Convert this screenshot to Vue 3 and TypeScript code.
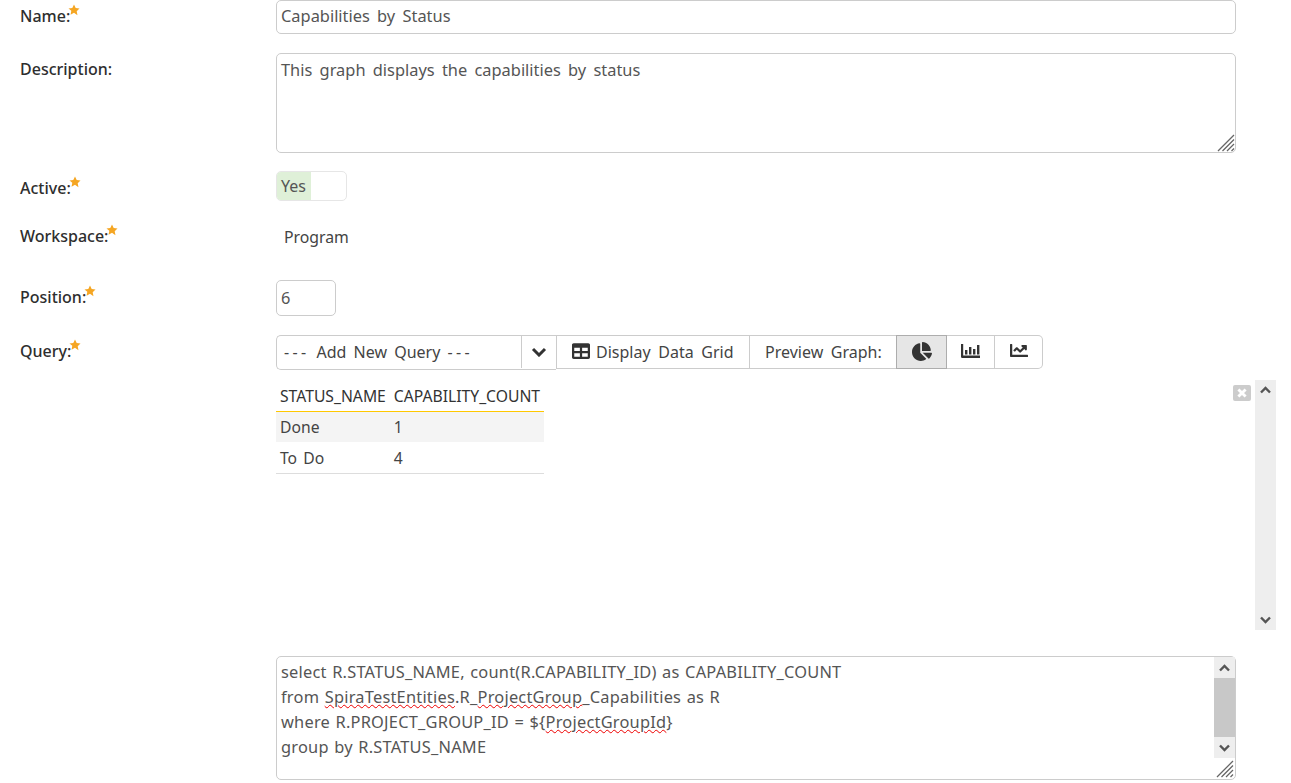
<script setup lang="ts">
const rows = [
  { name: 'Done', count: 1 },
  { name: 'To Do', count: 4 },
]
</script>

<template>
  <div class="page">
    <div class="row row-name">
      <label class="label">Name:<svg class="star" viewBox="0 0 24 24"><path d="M12 1l3.4 7.2 7.6 1-5.6 5.4 1.5 7.9L12 17.700l-6.900 3.800 1.500-7.900L1 9.200l7.600-1z" /></svg></label>
      <input class="field name-input" type="text" value="Capabilities by Status" spellcheck="false" />
    </div>
    <div class="row row-desc">
      <label class="label">Description:</label>
      <div class="area-wrap">
        <textarea class="field area" spellcheck="false">This graph displays the capabilities by status</textarea>
        <svg class="grip" viewBox="0 0 18 18"><path d="M17 1L1 17M17 5.500L5.500 17M17 10L10 17M17 14.500L14.500 17" /></svg>
      </div>
    </div>
    <div class="row row-active">
      <label class="label">Active:<svg class="star" viewBox="0 0 24 24"><path d="M12 1l3.4 7.2 7.6 1-5.6 5.4 1.5 7.9L12 17.700l-6.900 3.800 1.500-7.900L1 9.200l7.600-1z" /></svg></label>
      <div class="toggle"><span class="toggle-on">Yes</span></div>
    </div>
    <div class="row row-ws">
      <label class="label">Workspace:<svg class="star" viewBox="0 0 24 24"><path d="M12 1l3.4 7.2 7.6 1-5.6 5.4 1.5 7.9L12 17.700l-6.900 3.800 1.500-7.900L1 9.200l7.600-1z" /></svg></label>
      <div class="ws-value">Program</div>
    </div>
    <div class="row row-pos">
      <label class="label">Position:<svg class="star" viewBox="0 0 24 24"><path d="M12 1l3.4 7.2 7.6 1-5.6 5.4 1.500 7.900L12 17.700l-6.900 3.800 1.500-7.900L1 9.200l7.600-1z" /></svg></label>
      <input class="field pos" type="text" value="6" spellcheck="false" />
    </div>
    <div class="row row-query">
      <label class="label">Query:<svg class="star" viewBox="0 0 24 24"><path d="M12 1l3.4 7.2 7.6 1-5.6 5.4 1.500 7.900L12 17.700l-6.900 3.800 1.500-7.900L1 9.200l7.600-1z" /></svg></label>
      <div class="toolbar">
        <div class="select">
          <span class="select-text"><span class="dash">---</span> Add New Query <span class="dash">---</span></span>
          <span class="select-btn">
            <svg class="chev" viewBox="0 0 16 10"><path d="M2 2l6 6 6-6" /></svg>
          </span>
        </div>
        <button class="tb grid-btn">
          <svg class="ic-table" viewBox="0 0 512 512"><path d="M464 32H48C21.490 32 0 53.490 0 80v352c0 26.510 21.490 48 48 48h416c26.510 0 48-21.490 48-48V80c0-26.510-21.490-48-48-48zM224 416H64v-96h160v96zm0-160H64v-96h160v96zm224 160H288v-96h160v96zm0-160H288v-96h160v96z" /></svg>
          Display Data Grid
        </button>
        <div class="tb preview">Preview Graph:</div>
        <button class="tb icon active">
          <svg class="ic-pie" viewBox="0 0 544 512"><path d="M527.790 288H290.500l158.030 158.030c6.040 6.040 15.980 6.530 22.190.68 38.700-36.460 65.320-85.610 73.130-140.860 1.340-9.460-6.510-17.850-16.060-17.850zm-15.830-64.800C503.720 103.740 408.260 8.280 288.800.04 279.680-.59 272 7.100 272 16.240V240h223.770c9.140 0 16.820-7.680 16.190-16.800zM224 288V50.710c0-9.550-8.390-17.400-17.840-16.060C86.990 51.490-4.100 155.600.14 280.370 4.500 408.510 114.830 513.590 243.030 511.980c50.400-.63 96.970-16.870 135.260-44.030 7.900-5.600 8.420-17.230 1.570-24.080L224 288z" /></svg>
        </button>
        <button class="tb icon">
          <svg class="ic-bar" viewBox="0 0 19 14"><path d="M0 0h2.200v11.600H19V14H1.200A1.200 1.200 0 0 1 0 12.800zM4 6h2.400v4.600H4zM8 3h2.400v7.600H8zM12 5h2.400v5.600H12zM16 1h2.400v9.600H16z" /></svg>
        </button>
        <button class="tb icon last">
          <svg class="ic-line" viewBox="0 64 512 384" preserveAspectRatio="none"><path d="M496 384H64V80c0-8.840-7.160-16-16-16H16C7.160 64 0 71.160 0 80v336c0 17.670 14.330 32 32 32h464c8.840 0 16-7.160 16-16v-32c0-8.840-7.160-16-16-16zM464 96H345.940c-21.380 0-32.090 25.850-16.970 40.970l32.400 32.400L288 242.750l-73.370-73.370c-12.500-12.500-32.760-12.500-45.250 0l-68.690 68.690c-6.250 6.250-6.250 16.380 0 22.630l22.620 22.620c6.250 6.250 16.380 6.250 22.630 0L192 237.250l73.370 73.370c12.500 12.500 32.760 12.500 45.250 0l96-96 32.400 32.400c15.120 15.120 40.970 4.410 40.970-16.970V112c0-8.840-7.160-16-16-16z" /></svg>
        </button>
      </div>
    </div>
    <div class="row row-result">
      <div class="result">
        <table class="grid">
          <thead>
            <tr><th>STATUS_NAME</th><th>CAPABILITY_COUNT</th></tr>
          </thead>
          <tbody>
            <tr v-for="r in rows" :key="r.name"><td>{{ r.name }}</td><td>{{ r.count }}</td></tr>
          </tbody>
        </table>
        <span class="close">
          <svg viewBox="0 0 10 10"><path d="M2 2l6 6M8 2l-6 6" /></svg>
        </span>
        <div class="scroll">
          <svg class="sc-arrow" viewBox="0 0 12 8"><path d="M1.500 6.500L6 2l4.500 4.500" /></svg>
          <svg class="sc-arrow" viewBox="0 0 12 8"><path d="M1.500 1.500L6 6l4.500-4.500" /></svg>
        </div>
      </div>
    </div>
    <div class="row row-sql">
      <div class="sql">
        <div class="sql-text">
          <div>select R.STATUS_NAME, count(R.CAPABILITY_ID) as CAPABILITY_COUNT</div>
          <div>from <span class="sp">SpiraTestEntities</span>.R_<span class="sp">ProjectGroup</span>_Capabilities as R</div>
          <div>where R.PROJECT_GROUP_ID = ${<span class="sp">ProjectGroupId</span>}</div>
          <div>group by R.STATUS_NAME</div>
        </div>
        <div class="sql-scroll">
          <span class="sq-btn"><svg class="sc-arrow" viewBox="0 0 12 8"><path d="M1.500 6.500L6 2l4.500 4.500" /></svg></span>
          <span class="sq-thumb"></span>
          <span class="sq-btn"><svg class="sc-arrow" viewBox="0 0 12 8"><path d="M1.500 1.500L6 6l4.500-4.500" /></svg></span>
        </div>
        <svg class="grip" viewBox="0 0 18 18"><path d="M17 1L1 17M17 5.500L5.500 17M17 10L10 17M17 14.500L14.500 17" /></svg>
      </div>
    </div>
  </div>
</template>

<style scoped>
.page {
  width: 1291px;
  height: 783px;
  overflow: hidden;
  box-sizing: border-box;
  padding: 0 0 0 20px;
  font-family: "Noto Sans", "Open Sans", sans-serif;
  font-size: 16px;
  color: #444;
  background: #fff;
}
.row {
  display: flex;
  align-items: flex-start;
}
.label {
  flex: 0 0 256px;
  font-weight: 500;
  color: #2e2e2e;
  line-height: 20px;
}
.star {
  width: 12px;
  height: 12px;
  fill: #f5a623;
  position: relative;
  top: -6px;
  left: -2px;
  vertical-align: baseline;
}
.field {
  box-sizing: border-box;
  width: 960px;
  border: 1px solid #ccc;
  border-radius: 5px;
  padding: 0 4px;
  font: inherit;
  font-size: 16.400px;
  color: #555;
  word-spacing: 3px;
  background: #fff;
  outline: none;
}
.row-name { height: 53px; }
.row-name .label { margin-top: 6px; }
.name-input {
  height: 34px;
  padding-bottom: 4px;
}
.row-desc { height: 118px; }
.row-desc .label { margin-top: 6px; }
.area-wrap {
  position: relative;
  width: 960px;
  height: 100px;
}
.area {
  display: block;
  height: 100px;
  padding: 5px 4px;
  line-height: 22px;
  resize: none;
}
.row-active { height: 48px; }
.row-active .label { margin-top: 7px; }
.toggle {
  box-sizing: border-box;
  width: 71px;
  height: 30px;
  border: 1px solid #e6e6e6;
  border-radius: 5px;
  overflow: hidden;
}
.toggle-on {
  display: block;
  width: 34px;
  height: 100%;
  padding-left: 4px;
  box-sizing: border-box;
  background: #dff0d8;
  line-height: 29px;
  color: #555;
}
.row-ws { height: 61px; }
.row-ws .label { margin-top: 7px; }
.ws-value {
  margin: 6px 0 0 8px;
  line-height: 24px;
  color: #444;
  font-size: 15.800px;
}
.row-pos { height: 55px; }
.row-pos .label { margin-top: 7px; }
.pos {
  width: 60px;
  height: 36px;
  padding-bottom: 2px;
}
.row-query { height: 45px; }
.row-query .label { margin-top: 6px; }
.toolbar {
  display: flex;
  height: 34px;
}
.select {
  box-sizing: border-box;
  display: flex;
  width: 280px;
  height: 35px;
  border: 1px solid #ccc;
  border-right: 0;
  border-radius: 5px 0 0 5px;
}
.select-text {
  flex: 1;
  padding-left: 7px;
  line-height: 32px;
  color: #444;
  word-spacing: 3px;
  white-space: nowrap;
}
.dash {
  letter-spacing: 3.300px;
}
.select-btn {
  flex: 0 0 34px;
  display: flex;
  align-items: center;
  justify-content: center;
  border-left: 1px solid #ccc;
  margin-bottom: 1px;
}
.chev {
  width: 16px;
  height: 10px;
  fill: none;
  stroke: #333;
  stroke-width: 3;
}
.tb {
  box-sizing: border-box;
  height: 34px;
  display: flex;
  align-items: center;
  border: 1px solid #ccc;
  border-left: 0;
  background: #fff;
  font: inherit;
  color: #444;
  word-spacing: 3.500px;
  padding: 0;
  white-space: nowrap;
}
.grid-btn {
  width: 194px;
  padding-left: 15px;
  gap: 6px;
  border-left: 1px solid #ccc;
}
.preview {
  width: 146px;
  padding-left: 15px;
  border-right: 0;
}
.icon {
  width: 48px;
  justify-content: center;
  padding: 0;
}
.icon.active {
  width: 51px;
  background: #e6e6e6;
  border: 1px solid #adadad;
}
.icon.last {
  border-radius: 0 5px 5px 0;
}
.ic-table {
  width: 18px;
  height: 18px;
  margin-top: -2px;
  fill: #333;
}
.ic-pie {
  width: 20px;
  height: 19px;
  margin-top: -2px;
  fill: #333;
}
.ic-bar {
  width: 19px;
  height: 14px;
  margin-top: -3px;
  fill: #333;
}
.ic-line {
  width: 18px;
  height: 13px;
  margin-top: -3px;
  fill: #333;
}
.row-result { padding-left: 256px; height: 276px; }
.result {
  position: relative;
  box-sizing: border-box;
  width: 1000px;
  height: 250px;
  display: flex;
  justify-content: space-between;
  align-items: flex-start;
}
.grid {
  border-collapse: collapse;
  width: 268px;
  font-size: 15.700px;
  color: #444;
  word-spacing: 2px;
}
.grid th {
  text-align: left;
  font-weight: 400;
  color: #333;
  height: 31px;
  padding: 0 4px;
  border-bottom: 1px solid #ffc800;
  white-space: nowrap;
}
.grid td {
  height: 31px;
  padding: 0 4px;
}
.grid tbody tr:first-child { background: #f4f4f4; }
.grid tbody tr:first-child td { height: 30px; }
.grid tbody tr:last-child td { border-bottom: 1px solid #ddd; }
.close {
  position: absolute;
  left: 957px;
  top: 5px;
  width: 18px;
  height: 16px;
  background: #ccc;
  border-radius: 2px;
  display: flex;
  align-items: center;
  justify-content: center;
}
.close svg {
  width: 12px;
  height: 12px;
  fill: none;
  stroke: #fff;
  stroke-width: 2.400;
}
.scroll {
  box-sizing: border-box;
  width: 21px;
  height: 250px;
  background: #eee;
  display: flex;
  flex-direction: column;
  justify-content: space-between;
  align-items: center;
  padding: 6px 0;
}
.sc-arrow {
  width: 13px;
  height: 8px;
  fill: none;
  stroke: #555;
  stroke-width: 2.400;
  display: block;
}
.row-sql { padding-left: 256px; }
.sql {
  position: relative;
  box-sizing: border-box;
  width: 960px;
  height: 124px;
  border: 1px solid #ccc;
  border-radius: 5px;
  display: flex;
  justify-content: space-between;
}
.sql-text {
  padding: 2px 4px;
  line-height: 25px;
  font-size: 16.400px;
  color: #555;
  word-spacing: 1px;
  letter-spacing: 0.220px;
}
.sp {
  text-decoration: underline wavy #e00;
  text-decoration-thickness: 1px;
  text-underline-offset: 1px;
}
.sql-scroll {
  width: 21px;
  height: 101px;
  display: flex;
  flex-direction: column;
}
.sq-btn {
  height: 21px;
  background: #eee;
  display: flex;
  align-items: center;
  justify-content: center;
}
.sq-thumb {
  flex: 1;
  background: #c8c8c8;
}
.grip {
  position: absolute;
  right: 1px;
  bottom: 1px;
  width: 18px;
  height: 18px;
  fill: none;
  stroke: #666;
  stroke-width: 1.300;
}
</style>
